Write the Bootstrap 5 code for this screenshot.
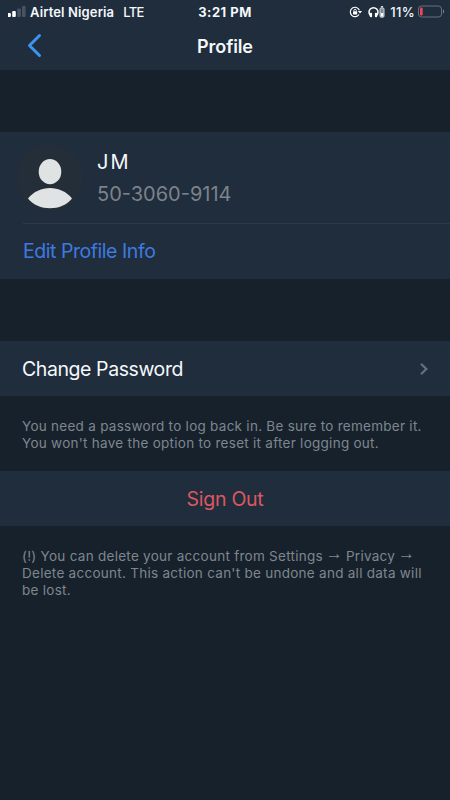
<!DOCTYPE html>
<html lang="en">
<head>
<meta charset="utf-8">
<meta name="viewport" content="width=device-width, initial-scale=1">
<title>Profile</title>
<link href="https://cdn.jsdelivr.net/npm/bootstrap@5.3.0/dist/css/bootstrap.min.css" rel="stylesheet">
<style>
body{background:#16212c;font-family:Inter,"Liberation Sans",sans-serif;color:#f5f8fb;min-height:800px;overflow:hidden}
svg{display:block;flex:none}
.panel{background:#1f2d3d}
.top-area{height:70px}
.status{height:24px;font-size:13px;font-weight:600;line-height:24px;white-space:nowrap}
.carrier{margin-left:4px;letter-spacing:.13px}
.net{margin-left:9px;font-weight:500;letter-spacing:-.7px}
.clock{font-weight:700;letter-spacing:.5px}
.batt-num{font-weight:500;letter-spacing:.35px}
.title-bar{height:46px}
.title-bar h1{font-size:18px;font-weight:600;line-height:45px;letter-spacing:-.1px}
.side{flex:1 1 0}
.profile{margin-top:62px;height:147px}
.who{height:91px;padding:13px 0 0 16px}
.avatar{margin-right:13px}
.name{font-size:20px;line-height:26px;margin-top:4px;letter-spacing:-.6px;word-spacing:-2.3px}
.phone{font-size:20px;line-height:26px;margin-top:6px;color:#7c828a;letter-spacing:0}
.edit{margin-left:23px;border-top:1px solid #2c3946;height:56px;line-height:54px;color:#3f7ae0;font-size:19.5px;letter-spacing:-.45px}
.line-row{height:55px;font-size:19.5px;letter-spacing:-.42px;padding-top:2px}
.signout{letter-spacing:-.25px}
.change{margin-top:62px;padding:2px 21px 0 22px}
.note{padding:0 22px;font-size:13.5px;line-height:17px;color:#7f868e;letter-spacing:.27px;white-space:nowrap}
.arrow{font-family:"Liberation Sans",sans-serif;font-size:17px;line-height:0;margin:0 -1.2px;vertical-align:2px}
.note-a{height:75px;padding-top:22px}
.note-b{padding-top:22px}
.signout{color:#dc5860}
</style>
</head>
<body>
<header class="panel top-area">
  <div class="status d-flex align-items-center">
    <div class="side d-flex align-items-center">
      <svg class="ms-2" width="18" height="14" viewBox="0 0 18 14"><rect x="-.5" y="8" width="3.4" height="4" rx="1" fill="#fff"/><rect x="4.2" y="6" width="3.6" height="6" rx="1" fill="#fff"/><rect x="9.3" y="3.5" width="3.6" height="8.5" rx="1" fill="#465361"/><rect x="14" y="1" width="3.6" height="11" rx="1" fill="#465361"/></svg>
      <span class="carrier">Airtel Nigeria</span><span class="net">LTE</span>
    </div>
    <span class="clock">3:21 PM</span>
    <div class="side d-flex align-items-center justify-content-end">
      <svg class="me-1" width="38" height="16" viewBox="0 0 38 16" fill="none" stroke="#fff">
        <path d="M11.4 6.2A4.7 4.7 0 1 0 11 10.5" stroke-width="1.2"/><path d="M9.9 7h4.2l-2.1 2.6z" fill="#fff" stroke="none"/><rect x="5" y="7.3" width="4.2" height="3.2" rx=".4" fill="#fff" stroke="none"/><path d="M5.9 7.4V6.5a1.2 1.2 0 0 1 2.4 0v.9" stroke-width=".9"/>
        <path d="M22.4 11.5A4.5 4.5 0 1 1 28.6 11.5" stroke-width="1.5"/><rect x="21.8" y="8.8" width="2.3" height="4.5" rx="1" fill="#fff" stroke="none"/><rect x="26.9" y="8.8" width="2.3" height="4.5" rx="1" fill="#fff" stroke="none"/>
        <rect x="32" y="4" width="4" height="9.2" rx="1.1" fill="#7d8892" stroke="#d5dade"/><path d="M32.9 2.8h2.2" stroke-width="1.2"/><rect x="32.8" y="9" width="2.4" height="3.5" fill="#fff" stroke="none"/>
      </svg>
      <span class="batt-num">11%</span>
      <svg width="35" height="14" viewBox="0 0 35 14"><rect x="3.5" y="1" width="23" height="11" rx="3" fill="none" stroke="#657381"/><rect x="5" y="2.5" width="2.7" height="8" rx="1.2" fill="#f04552"/><path d="M28 4.5c1.5.4 1.5 3.6 0 4z" fill="#758391"/></svg>
    </div>
  </div>
  <div class="title-bar d-flex">
    <div class="side"><svg width="50" height="44" viewBox="0 0 50 44"><path d="M39.5 11.5 29.5 21.5 39.5 31.5" fill="none" stroke="#3d93ee" stroke-width="3" stroke-linecap="round" stroke-linejoin="round"/></svg></div>
    <h1 class="m-0">Profile</h1>
    <div class="side"></div>
  </div>
</header>
<main>
  <section class="panel profile">
    <div class="who d-flex">
      <svg class="avatar" width="68" height="68" viewBox="0 0 68 68"><circle cx="34" cy="33" r="33.5" fill="#242e39"/><ellipse cx="34" cy="26.7" rx="11.3" ry="12.6" fill="#e0e3e4"/><path d="M12 53.5C23 39.5 45 39.5 56 53.5C46 66.5 22 66.5 12 53.5Z" fill="#e0e3e4"/></svg>
      <div><div class="name">J M</div><div class="phone">50-3060-9114</div></div>
    </div>
    <div class="edit">Edit Profile Info</div>
  </section>
  <section class="panel line-row change d-flex align-items-center justify-content-between">
    <span>Change Password</span>
    <svg width="10" height="14" viewBox="0 0 10 14"><path d="M2.7 1.5 7.4 6 2.7 10.5" fill="none" stroke="#66717d" stroke-width="2.3" stroke-linecap="round" stroke-linejoin="round"/></svg>
  </section>
  <div class="note note-a">You need a password to log back in. Be sure to remember it.<br>You won't have the option to reset it after logging out.</div>
  <section class="panel line-row signout d-flex align-items-center justify-content-center"><span>Sign Out</span></section>
  <div class="note note-b">(!) You can delete your account from Settings <span class="arrow">→</span> Privacy <span class="arrow">→</span><br>Delete account. This action can't be undone and all data will<br>be lost.</div>
</main>
<script src="https://cdn.jsdelivr.net/npm/bootstrap@5.3.0/dist/js/bootstrap.bundle.min.js"></script>
</body>
</html>
